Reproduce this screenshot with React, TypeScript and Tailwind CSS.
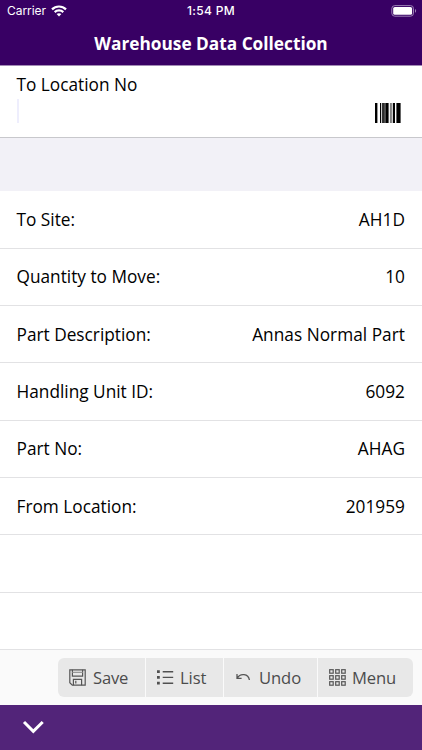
import React from "react";

const rows: [string, string][] = [
  ["To Site:", "AH1D"],
  ["Quantity to Move:", "10"],
  ["Part Description:", "Annas Normal Part"],
  ["Handling Unit ID:", "6092"],
  ["Part No:", "AHAG"],
  ["From Location:", "201959"],
  ["", ""],
  ["", ""],
];

function WifiIcon() {
  return (
    <svg width="16" height="12" viewBox="0 0 16 12" fill="none" stroke="#fff" strokeWidth="2.2">
      <path d="M1 4.4C4.9 .5 11.1 .5 15 4.4" />
      <path d="M3.7 7.1c2.4-2.3 6.2-2.3 8.6 0" />
      <path d="M8 11.5 5.6 9.1c1.4-1.2 3.4-1.2 4.8 0Z" fill="#fff" stroke="none" />
    </svg>
  );
}

function BatteryIcon() {
  return (
    <svg width="26" height="12" viewBox="0 0 26 12">
      <rect x=".8" y=".6" width="21.7" height="10.6" rx="3" fill="none" stroke="#9c80b5" />
      <rect x="2.2" y="2" width="18.9" height="7.8" rx="1.6" fill="#fff" />
      <path d="M24 4v3.7c1.5-.6 1.5-3.1 0-3.7Z" fill="#9c80b5" />
    </svg>
  );
}

function BarcodeIcon() {
  return (
    <svg width="26" height="20" viewBox="0 0 26 20" fill="#000">
      <path d="M0 0h2.4v20H0zM5 0h1.2v20H5zM7.2 0h1.6v20H7.2zM11 0h2.6v20H11zM17.8 0h2.2v20h-2.2zM21.4 0h4.2v20h-4.2z" />
      <path d="M8.8 0H11v20H8.8z" opacity=".7" />
      <path d="M14.9 0h2v20h-2z" opacity=".5" />
    </svg>
  );
}

function SaveIcon() {
  return (
    <svg width="17" height="17" viewBox="0 0 17 17" fill="none" stroke="#555" strokeWidth="1.2">
      <path d="M.8.8h15.4v15.4H3.3L.8 13.7Z" />
      <path d="M3.4.8v6.4h10.2V.8M4.4 16.2v-5.8h8.2v5.8M6.8 11.8v2.7" />
      <path d="M3.4 3.4h10.2" stroke="#999" />
    </svg>
  );
}

function ListIcon() {
  return (
    <svg width="17" height="15" viewBox="0 0 17 15" fill="#505050">
      <path d="M0 .3h2.8v2.8H0zM0 6h2.8v2.8H0zM0 11.8h2.8v2.8H0z" />
      <path d="M5.7 1.1H16.2v1.3H5.7zM5.7 6.8H16.2v1.3H5.7zM5.7 12.6H16.2v1.3H5.7z" />
    </svg>
  );
}

function UndoIcon() {
  return (
    <svg width="15" height="9" viewBox="0 0 15 9" fill="none" stroke="#555" strokeWidth="1.3">
      <path d="M1 1v4.4h4.6M1.1 5.2C4.3-.3 12.4.5 13.4 7" />
    </svg>
  );
}

function MenuIcon() {
  return (
    <svg width="17" height="17" viewBox="0 0 17 17" fill="none" stroke="#555" strokeWidth="1.2">
      {[0.7, 6.7, 12.7].map((y) =>
        [0.7, 6.7, 12.7].map((x) => <rect key={`${x}-${y}`} x={x} y={y} width="3.5" height="3.5" />),
      )}
    </svg>
  );
}

export default function App() {
  return (
    <div className="flex h-[750px] w-[422px] flex-col overflow-hidden bg-white font-['Open_Sans','Noto_Sans',sans-serif] text-[17.25px] text-black">
      <header className="h-[66px] shrink-0 border-b border-[#a28bb5] bg-[#380064] text-white">
        <div className="grid h-[22px] grid-cols-3 items-center pr-[5px] pl-[7px] font-['Inter',sans-serif] text-[12px]">
          <div className="flex items-center gap-[5px]">
            <span className="w-[39px] tracking-[-0.05px] whitespace-nowrap">Carrier</span>
            <WifiIcon />
          </div>
          <span className="pr-[2px] text-center font-medium tracking-[0.35px]">1:54 PM</span>
          <div className="flex justify-end"><BatteryIcon /></div>
        </div>
        <h1 className="text-center text-[17.25px] leading-[43px] font-bold">Warehouse Data Collection</h1>
      </header>
      <section className="flex h-[72px] shrink-0 flex-col border-b border-[#c8c8cc] pt-[7px] pr-[21px] pl-[16.5px]">
        <label className="leading-[24px]">To Location No</label>
        <div className="flex h-[31px] items-center justify-between">
          <span className="mb-[3px] h-[24px] w-[2px] bg-[#eeeefd]" />
          <span className="pt-px"><BarcodeIcon /></span>
        </div>
      </section>
      <div className="h-[53px] shrink-0 bg-[#f2f1f7]" />
      <main className="grid h-[459px] shrink-0 grid-rows-8 pt-[0.6px]">
        {rows.map(([label, value], i) => (
          <div key={i} className="flex items-center justify-between border-b border-[#e2e2e4] pt-[0.5px] pr-[17px] pl-[16.5px]">
            <span>{label}</span>
            <span className="tracking-[0.03px]">{value}</span>
          </div>
        ))}
      </main>
      <nav className="flex h-[55px] shrink-0 items-start bg-[#fafafa] pt-[8px] pl-[58px] text-[16.6px] text-[#4c4c4c]">
        <div className="flex h-[39px] w-[355px] overflow-hidden rounded-[6px] bg-[#e8e8e8]">
          <button className="flex w-[88px] items-center gap-[7px] border-r border-[#fafafa] pl-[11px] tracking-[-0.2px]"><SaveIcon /><span className="pt-[1.5px]">Save</span></button>
          <button className="flex w-[78px] items-center gap-[6px] border-r border-[#fafafa] pl-[11px] tracking-[-0.1px]"><ListIcon /><span className="pt-[1.5px]">List</span></button>
          <button className="flex w-[94px] items-center gap-[8px] border-r border-[#fafafa] pl-[12px] tracking-[-0.1px]"><UndoIcon /><span className="pt-[1.5px]">Undo</span></button>
          <button className="flex w-[95px] items-center gap-[6px] pl-[11px] tracking-[-0.1px]"><MenuIcon /><span className="pt-[1.5px]">Menu</span></button>
        </div>
      </nav>
      <footer className="h-[45px] shrink-0 bg-[#522479] pt-[14px] pl-[22px]">
        <svg width="23" height="16" viewBox="0 0 23 16" fill="none" stroke="#fff" strokeWidth="3">
          <path d="m2 3 9.3 9.3L20.7 3" />
        </svg>
      </footer>
    </div>
  );
}
